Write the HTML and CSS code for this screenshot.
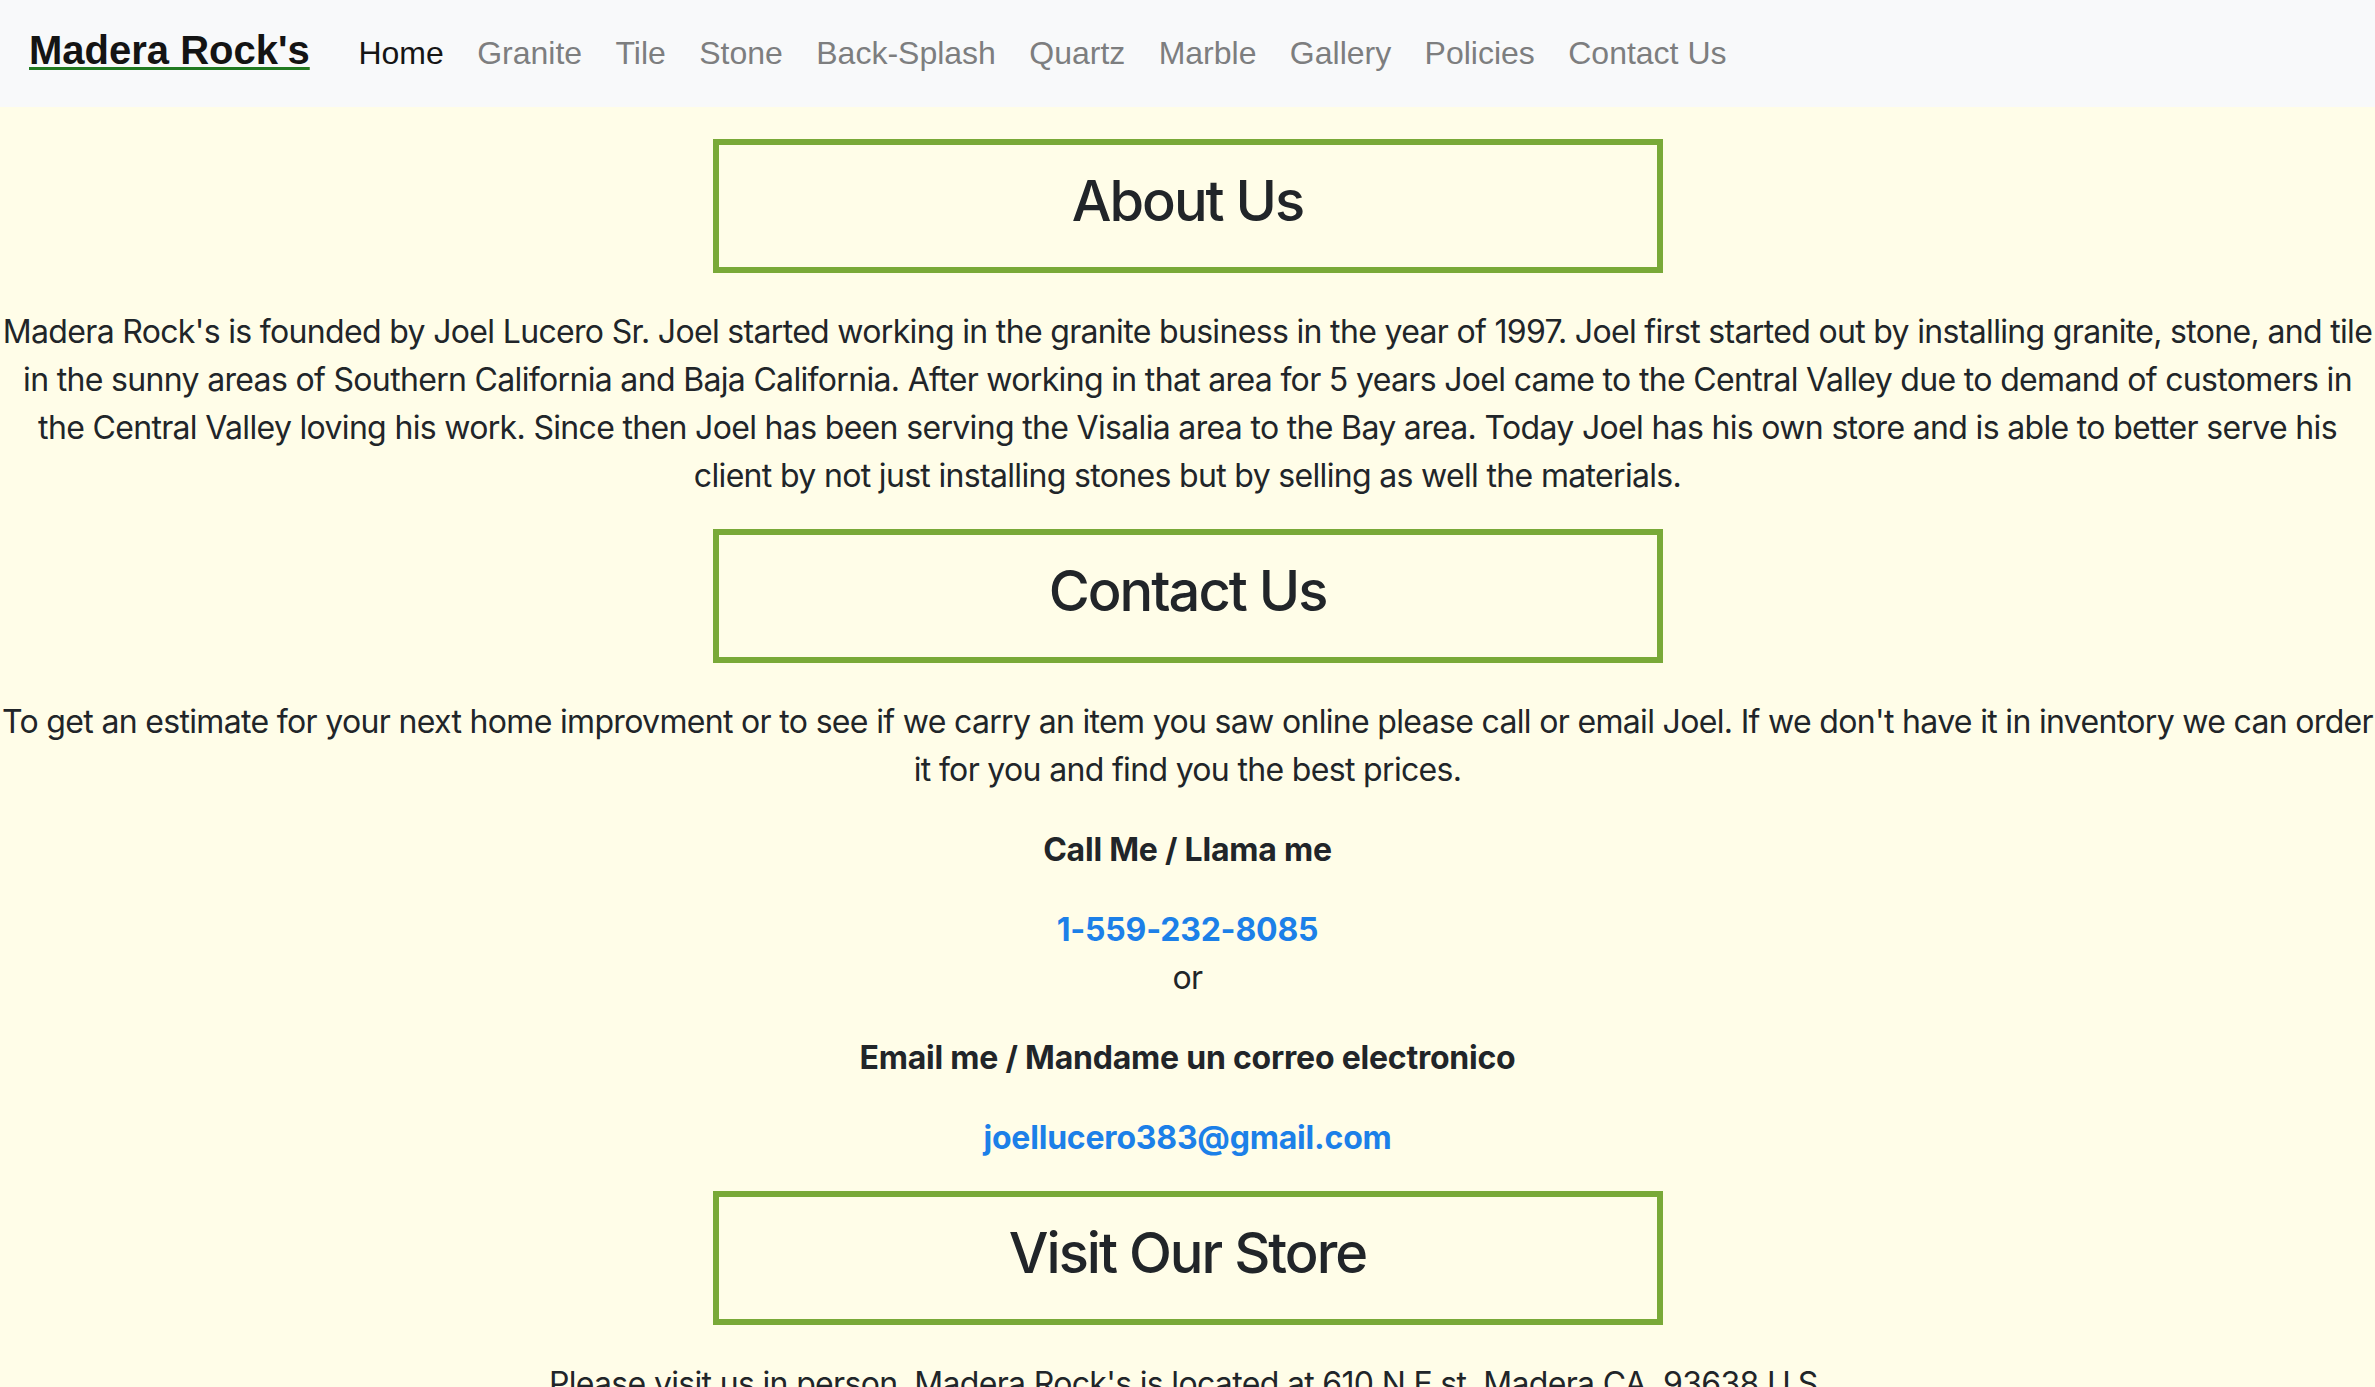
FILE: index.html
```html
<!DOCTYPE html>
<html lang="en">
<head>
<meta charset="utf-8">
<title>Madera Rock's</title>
<link rel="stylesheet" href="styles.css">
</head>
<body>
<nav class="navbar">
  <a class="brand" href="#">Madera Rock's</a>
  <ul class="nav-links">
    <li><a class="nav-link active" href="#">Home</a></li>
    <li><a class="nav-link" href="#">Granite</a></li>
    <li><a class="nav-link" href="#">Tile</a></li>
    <li><a class="nav-link" href="#">Stone</a></li>
    <li><a class="nav-link" href="#">Back-Splash</a></li>
    <li><a class="nav-link" href="#">Quartz</a></li>
    <li><a class="nav-link" href="#">Marble</a></li>
    <li><a class="nav-link" href="#">Gallery</a></li>
    <li><a class="nav-link" href="#">Policies</a></li>
    <li><a class="nav-link" href="#">Contact Us</a></li>
  </ul>
</nav>
<main class="content">
  <div class="title-box"><h3>About Us</h3></div>
  <p>Madera Rock's is founded by Joel Lucero Sr. Joel started working in the granite business in the year of 1997. Joel first started out by installing granite, stone, and tile in the sunny areas of Southern California and Baja California. After working in that area for 5 years Joel came to the Central Valley due to demand of customers in the Central Valley loving his work. Since then Joel has been serving the Visalia area to the Bay area. Today Joel has his own store and is able to better serve his client by not just installing stones but by selling as well the materials.</p>

  <div class="title-box"><h3>Contact Us</h3></div>
  <p>To get an estimate for your next home improvment or to see if we carry an item you saw online please call or email Joel. If we don't have it in inventory we can order it for you and find you the best prices.</p>
  <p class="label">Call Me / Llama me</p>
  <p><a class="contact-link" href="#">1-559-232-8085</a><br>or</p>
  <p class="label">Email me / Mandame un correo electronico</p>
  <p><a class="contact-link" href="#">joellucero383@gmail.com</a></p>

  <div class="title-box"><h3>Visit Our Store</h3></div>
  <p>Please visit us in person. Madera Rock's is located at 610 N E st. Madera CA. 93638 U.S.</p>
</main>
</body>
</html>
```
FILE: styles.css
```css
html, body {
  margin: 0;
  padding: 0;
}

body {
  background: #fffde8;
  color: #212529;
  font-family: Inter, "Noto Sans", sans-serif;
  font-size: 32px;
  line-height: 48px;
  letter-spacing: -0.67px;
}

.navbar {
  display: flex;
  align-items: baseline;
  box-sizing: border-box;
  height: 107px;
  padding: 20px 32px 0 29px;
  background: #f8f9fa;
  font-family: "Liberation Sans", Arial, sans-serif;
  letter-spacing: 0;
}

.brand {
  font-size: 40px;
  line-height: 60px;
  font-weight: 700;
  color: #141414;
  text-decoration: underline;
  text-decoration-color: #217a21;
  text-decoration-thickness: 3px;
  text-underline-offset: 3px;
  margin-right: 32px;
}

.nav-links {
  display: flex;
  align-items: baseline;
  list-style: none;
  margin: 0;
  padding: 0;
}

.nav-link {
  display: block;
  padding: 0 16.7px;
  font-size: 32px;
  line-height: 48px;
  color: #7d7e7f;
  text-decoration: none;
}

.nav-link.active {
  color: #151515;
}

.content {
  text-align: center;
  padding-top: 32px;
}

.title-box {
  box-sizing: border-box;
  width: 40%;
  margin: 0 auto 32px;
  padding: 23px 0 16px;
  border: 6px solid #79a938;
}

.title-box h3 {
  margin: 0 0 16px;
  font-size: 56px;
  line-height: 67px;
  font-weight: 500;
  letter-spacing: -2px;
}

.content p {
  margin: 0 0 29px;
  padding-top: 3px;
}

.label {
  font-weight: 700;
  letter-spacing: -0.22px;
}

.contact-link {
  color: #1c80e8;
  font-weight: 700;
  letter-spacing: -0.2px;
  text-decoration: none;
}
```
